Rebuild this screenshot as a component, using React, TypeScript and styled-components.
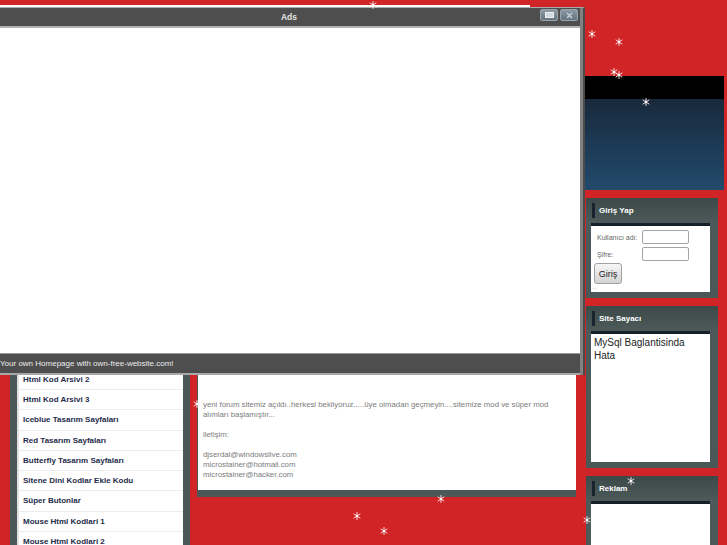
import styled, { createGlobalStyle } from 'styled-components';

const GlobalStyle = createGlobalStyle`
  html, body {
    margin: 0;
    padding: 0;
    background: #d12427;
  }
  body {
    font-family: "Liberation Sans", Arial, sans-serif;
    overflow: hidden;
  }
`;

const slate = '#4a5857';

const Page = styled.div`
  position: relative;
  width: 727px;
  height: 545px;
  overflow: hidden;
  background: #d12427;
`;

const Header = styled.div`
  height: 7px;
  padding-top: 5px;
  box-sizing: border-box;
`;

const HeaderLine = styled.div`
  width: 530px;
  height: 2px;
  background: #ffffff;
`;

const Columns = styled.div`
  display: flex;
  align-items: flex-start;
`;

/* left menu */
const LeftColumn = styled.div`
  width: 190px;
  padding-left: 10px;
  box-sizing: border-box;
`;

const Sidebar = styled.nav`
  background: ${slate};
  padding: 0 7px;
`;

const SidebarTitle = styled.div`
  height: 38.75px;
  display: flex;
  align-items: center;
  padding-left: 6px;
  color: #fff;
  font-size: 8px;
  font-weight: bold;
`;

const MenuList = styled.ul`
  list-style: none;
  margin: 0;
  padding: 0;
  background: #fff;
  border-left: 2px solid #e1e1e1;
`;

const MenuItem = styled.li`
  height: 20.25px;
  box-sizing: border-box;
  border-bottom: 1px solid #ececec;
  padding-left: 4px;
  font-size: 8px;
  font-weight: bold;
  line-height: 19.25px;
  color: #1f2c4b;
  white-space: nowrap;
`;

/* center content */
const CenterColumn = styled.main`
  width: 395px;
  padding: 13px 0 0 7px;
  box-sizing: border-box;
`;

const ContentBox = styled.article`
  width: 379px;
  box-sizing: border-box;
  background: #fff;
  border-left: 1px solid ${slate};
  border-bottom: 7px solid ${slate};
  padding: 0 5px 10px 5px;
  color: #7b7b7b;
  font-size: 7.8px;
  line-height: 10px;
`;

const ContentTitle = styled.h2`
  margin: 0;
  height: 24px;
  line-height: 24px;
  font-size: 9px;
  color: #1f2c4b;
`;

const ContentText = styled.p<{ $top?: number }>`
  margin: 0;
  padding-top: ${(p) => p.$top ?? 0}px;
`;

const Spacer = styled.div`
  height: 10px;
`;

/* right column */
const RightColumn = styled.aside`
  width: 142px;
  padding-top: 69px;
`;

const Banner = styled.div`
  width: 139px;
`;

const BannerTop = styled.div`
  height: 23px;
  background: #000;
`;

const BannerSea = styled.div`
  height: 91px;
  background: linear-gradient(#18293a, #1d3a55 50%, #224a6b);
`;

const Box = styled.section`
  width: 132px;
  margin: 8px 0 0 1px;
  box-sizing: border-box;
  padding: 0 8px 6px 5px;
  background: linear-gradient(#3c4949, #4c5a59 25px, ${slate});
`;

const BoxTitle = styled.div`
  height: 25px;
  display: flex;
  align-items: center;
  gap: 4px;
  padding-left: 1px;
  color: #fff;
  font-size: 8px;
  font-weight: bold;
`;

const Marker = styled.span`
  width: 3px;
  height: 15px;
  background: #19232d;
`;

const BoxBody = styled.div<{ $height: number }>`
  height: ${(p) => p.$height}px;
  box-sizing: content-box;
  border-top: 3px solid #16202a;
  background: #fff;
`;

const LoginForm = styled.form`
  display: grid;
  grid-template-columns: 48px 47px;
  row-gap: 3px;
  align-items: center;
  padding: 4px 0 0 3px;
`;

const Label = styled.label`
  padding-left: 3px;
  font-size: 7px;
  color: #666;
  white-space: nowrap;
`;

const Input = styled.input`
  width: 47px;
  height: 14px;
  box-sizing: border-box;
  padding: 0;
  border: 1px solid #a4a4a4;
  border-radius: 2px;
  background: #fff;
`;

const LoginButton = styled.button`
  grid-column: 1;
  margin-top: -1px;
  width: 28px;
  height: 21px;
  padding: 0;
  border: 1px solid #a2a2a2;
  border-radius: 3px;
  background: linear-gradient(#f6f6f6, #d4d4d4);
  font-family: "Liberation Sans", Arial, sans-serif;
  font-size: 9px;
  color: #222;
`;

const Dots = styled.div`
  padding: 1px 0 0 1px;
  font-size: 6px;
  line-height: 5px;
  color: #999;
`;

const CounterText = styled.div`
  padding: 2px 8px 0 3px;
  font-size: 10px;
  line-height: 13px;
  color: #222;
`;

/* ads window */
const Window = styled.div`
  position: absolute;
  left: -6px;
  top: 7px;
  width: 591px;
  height: 368px;
  box-sizing: border-box;
  border-right: 2px solid #4a4a4a;
  border-top: 1px solid #a9a9a9;
  display: flex;
  flex-direction: column;
  background: #4e4e4e;
`;

const WindowFrame = styled.div`
  flex: 1;
  display: flex;
  flex-direction: column;
  border-right: 3px solid #828282;
`;

const TitleBar = styled.div`
  height: 18px;
  display: grid;
  grid-template-columns: 1fr auto 1fr;
  align-items: start;
  padding-left: 4px;
  border-bottom: 2px solid #b3b3b3;
  background: #4e4e4e;
`;

const WindowTitle = styled.div`
  grid-column: 2;
  line-height: 18px;
  font-size: 8.5px;
  font-weight: bold;
  color: #e4e4e4;
`;

const TitleButtons = styled.div`
  justify-self: end;
  display: flex;
  gap: 2px;
  padding: 1px 2px 0 0;
`;

const TitleButton = styled.div`
  width: 18px;
  height: 12px;
  box-sizing: border-box;
  display: flex;
  align-items: center;
  justify-content: center;
  border: 1px solid #97a4ad;
  border-radius: 2px;
  background: linear-gradient(#8d9aa4, #65747e);
`;

const WindowContent = styled.div`
  flex: 1;
  background: #fff;
  border-bottom: 1px solid #999;
`;

const WindowFooter = styled.div`
  height: 19px;
  padding-left: 6px;
  line-height: 19px;
  font-size: 8px;
  color: #ececec;
  border-bottom: 2px solid #a8a8a8;
  white-space: nowrap;
`;

const Flake = styled.svg`
  position: absolute;
  width: 8px;
  height: 8px;
  overflow: visible;
`;

const Snowflake = ({ x, y }: { x: number; y: number }) => (
  <Flake style={{ left: x - 4, top: y - 4 }} viewBox="0 0 8 8">
    <g stroke="#ffe6e6" strokeWidth="1" strokeLinecap="round" opacity="0.95">
      <line x1="4" y1="0.5" x2="4" y2="7.5" />
      <line x1="1" y1="2" x2="7" y2="6" />
      <line x1="1" y1="6" x2="7" y2="2" />
    </g>
    <circle cx="4" cy="4" r="1.2" fill="#fff" />
  </Flake>
);

const hiddenItems = [
  'Ana Sayfa',
  'Forum',
  'Ziyaretçi Defteri',
  'Msn Nickleri',
  'Msn Avatarları',
  'Flash Oyunlar',
  'Site Kodları',
  'Html Kodları',
  'Javascript Kodları',
  'Css Kodları',
  'Renk Kodları',
  'Müzik Kodları',
  'Video Kodları',
  'Yazı Efektleri',
  'Html Kod Arsivi',
  'Html Kod Arsivi 1',
];

const menuItems = [
  ...hiddenItems,
  'Html Kod Arsivi 2',
  'Html Kod Arsivi 3',
  'Iceblue Tasarım Sayfaları',
  'Red Tasarım Sayfaları',
  'Butterfly Tasarım Sayfaları',
  'Sitene Dini Kodlar Ekle Kodu',
  'Süper Butonlar',
  'Mouse Html Kodlari 1',
  'Mouse Html Kodlari 2',
  'Mouse Html Kodlari 3',
];

const flakes = [
  { x: 373, y: 5 },
  { x: 592, y: 34 },
  { x: 619, y: 42 },
  { x: 614, y: 72 },
  { x: 619, y: 75 },
  { x: 646, y: 102 },
  { x: 441, y: 499 },
  { x: 357, y: 516 },
  { x: 384, y: 531 },
  { x: 631, y: 481 },
  { x: 587, y: 520 },
  { x: 197, y: 404 },
];

export default function App() {
  return (
    <Page>
      <GlobalStyle />
      <Header>
        <HeaderLine />
      </Header>
      <Columns>
        <LeftColumn>
          <Sidebar>
            <SidebarTitle>Menü</SidebarTitle>
            <MenuList>
              {menuItems.map((item) => (
                <MenuItem key={item}>{item}</MenuItem>
              ))}
            </MenuList>
          </Sidebar>
        </LeftColumn>

        <CenterColumn>
          <ContentBox>
            <ContentTitle>Duyurular</ContentTitle>
            <ContentText $top={356}>
              yeni forum sitemiz açıldı..herkesi bekliyoruz.....üye olmadan geçmeyin....sitemize mod ve süper mod
              alımları başlamıştır...
            </ContentText>
            <Spacer />
            <ContentText>iletişim:</ContentText>
            <Spacer />
            <ContentText>
              djserdal@windowslive.com
              <br />
              microstainer@hotmail.com
              <br />
              microstainer@hacker.com
            </ContentText>
          </ContentBox>
        </CenterColumn>

        <RightColumn>
          <Banner>
            <BannerTop />
            <BannerSea />
          </Banner>

          <Box>
            <BoxTitle>
              <Marker />
              Giriş Yap
            </BoxTitle>
            <BoxBody $height={66}>
              <LoginForm onSubmit={(e) => e.preventDefault()}>
                <Label>Kullanıcı adı:</Label>
                <Input type="text" />
                <Label>Şifre:</Label>
                <Input type="password" />
                <LoginButton type="submit">Giriş</LoginButton>
              </LoginForm>
              <Dots>...</Dots>
            </BoxBody>
          </Box>

          <Box>
            <BoxTitle>
              <Marker />
              Site Sayacı
            </BoxTitle>
            <BoxBody $height={128}>
              <CounterText>MySql Baglantisinda Hata</CounterText>
            </BoxBody>
          </Box>

          <Box>
            <BoxTitle>
              <Marker />
              Reklam
            </BoxTitle>
            <BoxBody $height={80} />
          </Box>
        </RightColumn>
      </Columns>

      <Window>
        <WindowFrame>
          <TitleBar>
            <WindowTitle>Ads</WindowTitle>
            <TitleButtons>
              <TitleButton>
                <svg width="9" height="6" viewBox="0 0 9 6">
                  <rect x="0.5" y="0.5" width="8" height="5" fill="#d3d9dd" stroke="#eef1f3" />
                </svg>
              </TitleButton>
              <TitleButton>
                <svg width="7" height="7" viewBox="0 0 7 7">
                  <path d="M1 1 L6 6 M6 1 L1 6" stroke="#c9d0d5" strokeWidth="1.4" />
                </svg>
              </TitleButton>
            </TitleButtons>
          </TitleBar>
          <WindowContent />
          <WindowFooter>Your own Homepage with own-free-website.com!</WindowFooter>
        </WindowFrame>
      </Window>

      {flakes.map((f, i) => (
        <Snowflake key={i} x={f.x} y={f.y} />
      ))}
    </Page>
  );
}
